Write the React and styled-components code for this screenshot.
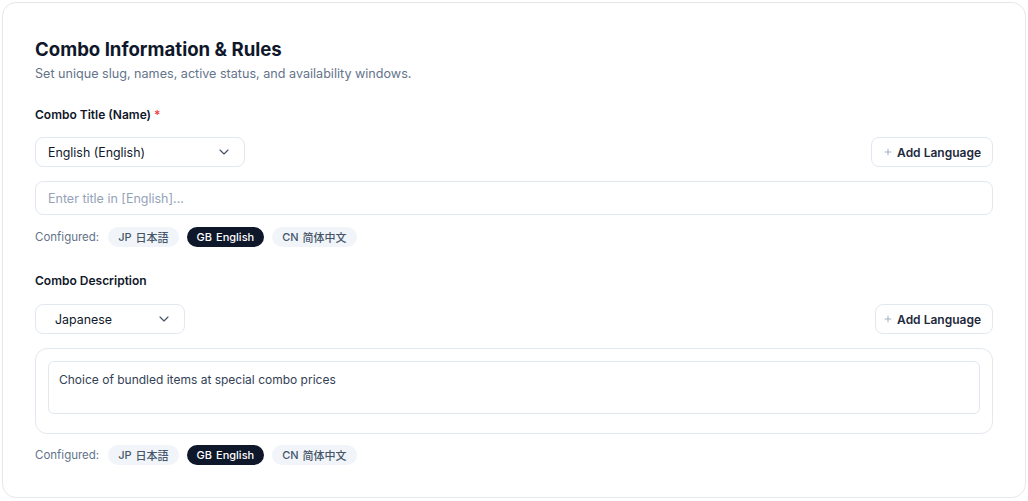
import styled, { createGlobalStyle } from "styled-components";
import { ChevronDown, Plus } from "lucide-react";

const GlobalStyle = createGlobalStyle`
  body {
    margin: 0;
    background: #ffffff;
    font-family: Inter, "Noto Sans", "Noto Sans CJK JP", sans-serif;
    color: #0f172a;
  }
  * { box-sizing: border-box; }
`;

const Page = styled.div`
  padding: 2px;
`;

const Card = styled.section`
  width: 1024px;
  height: 496px;
  border: 1px solid #e5e7eb;
  border-radius: 14px;
  padding: 32px;
  background: #fff;
`;

const Title = styled.h2`
  margin: 0;
  font-size: 18.6px;
  line-height: 28px;
  font-weight: 700;
  color: #0f172a;
`;

const Subtitle = styled.p`
  margin: 1px 0 23px;
  font-size: 12.6px;
  line-height: 20px;
  color: #64748b;
`;

const Label = styled.div`
  font-size: 12px;
  line-height: 16px;
  font-weight: 600;
  color: #0f172a;
  margin-top: ${(p) => p.$top || 0}px;
  margin-bottom: ${(p) => p.$bottom || 15}px;

  span {
    color: #ef4444;
    margin-left: 3px;
  }
`;

const Row = styled.div`
  display: flex;
  justify-content: space-between;
  align-items: center;
  height: 30px;
  margin-bottom: 14px;
`;

const Select = styled.button`
  display: flex;
  align-items: center;
  justify-content: space-between;
  width: ${(p) => p.$width}px;
  height: 30px;
  padding: 0 12px 0 ${(p) => p.$padLeft}px;
  border: 1px solid #e2e8f0;
  border-radius: 8px;
  background: #fff;
  font-family: inherit;
  font-size: 12.4px;
  color: #0f172a;
  cursor: pointer;

  svg {
    color: #475569;
  }
`;

const AddButton = styled.button`
  display: flex;
  align-items: center;
  gap: 4px;
  height: 30px;
  padding: 0 11px 0 ${(p) => p.$padLeft}px;
  border: 1px solid #e2e8f0;
  border-radius: 8px;
  background: #fff;
  font-family: inherit;
  font-size: 12px;
  font-weight: 600;
  color: #1e293b;
  cursor: pointer;

  svg {
    color: #94a3b8;
  }
`;

const Input = styled.input`
  display: block;
  width: 100%;
  height: 34px;
  padding: 0 12px;
  border: 1px solid #e2e8f0;
  border-radius: 8px;
  font-family: inherit;
  font-size: 12.5px;
  color: #0f172a;
  outline: none;

  &::placeholder {
    color: #94a3b8;
  }
`;

const EditorBox = styled.div`
  border: 1px solid #e2e8f0;
  border-radius: 12px;
  padding: 12px 12px 19px;
`;

const TextArea = styled.textarea`
  display: block;
  width: 100%;
  height: 53px;
  padding: 10px;
  border: 1px solid #e2e8f0;
  border-radius: 6px;
  font-family: inherit;
  font-size: 12px;
  line-height: 16px;
  color: #334155;
  resize: none;
  outline: none;
`;

const ConfiguredRow = styled.div`
  display: flex;
  align-items: center;
  gap: 8px;
  margin-top: ${(p) => p.$top}px;
  height: 20px;
`;

const ConfiguredLabel = styled.span`
  font-size: 11.5px;
  color: #64748b;
  margin-right: 1px;
`;

const Chip = styled.span`
  display: inline-flex;
  align-items: center;
  gap: 4px;
  height: 20px;
  padding: 0 10px;
  border-radius: 999px;
  font-size: 11px;
  font-weight: 500;
  background: ${(p) => (p.$active ? "#0f172a" : "#f1f5f9")};
  color: ${(p) => (p.$active ? "#ffffff" : "#475569")};
`;

const langs = [
  { code: "JP", name: "日本語" },
  { code: "GB", name: "English", active: true },
  { code: "CN", name: "简体中文" },
];

function Configured({ top }) {
  return (
    <ConfiguredRow $top={top}>
      <ConfiguredLabel>Configured:</ConfiguredLabel>
      {langs.map((l) => (
        <Chip key={l.code} $active={l.active}>
          <span>{l.code}</span>
          <span>{l.name}</span>
        </Chip>
      ))}
    </ConfiguredRow>
  );
}

function AddLanguage({ padLeft }) {
  return (
    <AddButton $padLeft={padLeft}>
      <Plus size={10} strokeWidth={2} />
      Add Language
    </AddButton>
  );
}

export default function App() {
  return (
    <Page>
      <GlobalStyle />
      <Card>
        <Title>Combo Information &amp; Rules</Title>
        <Subtitle>
          Set unique slug, names, active status, and availability windows.
        </Subtitle>

        <Label $bottom={14}>
          Combo Title (Name)<span>*</span>
        </Label>
        <Row>
          <Select $width={210} $padLeft={12}>
            English (English)
            <ChevronDown size={16} strokeWidth={1.75} />
          </Select>
          <AddLanguage padLeft={11} />
        </Row>
        <Input placeholder="Enter title in [English]..." />
        <Configured top={12} />

        <Label $top={26}>Combo Description</Label>
        <Row>
          <Select $width={150} $padLeft={19}>
            Japanese
            <ChevronDown size={16} strokeWidth={1.75} />
          </Select>
          <AddLanguage padLeft={7} />
        </Row>
        <EditorBox>
          <TextArea defaultValue="Choice of bundled items at special combo prices" />
        </EditorBox>
        <Configured top={11} />
      </Card>
    </Page>
  );
}
